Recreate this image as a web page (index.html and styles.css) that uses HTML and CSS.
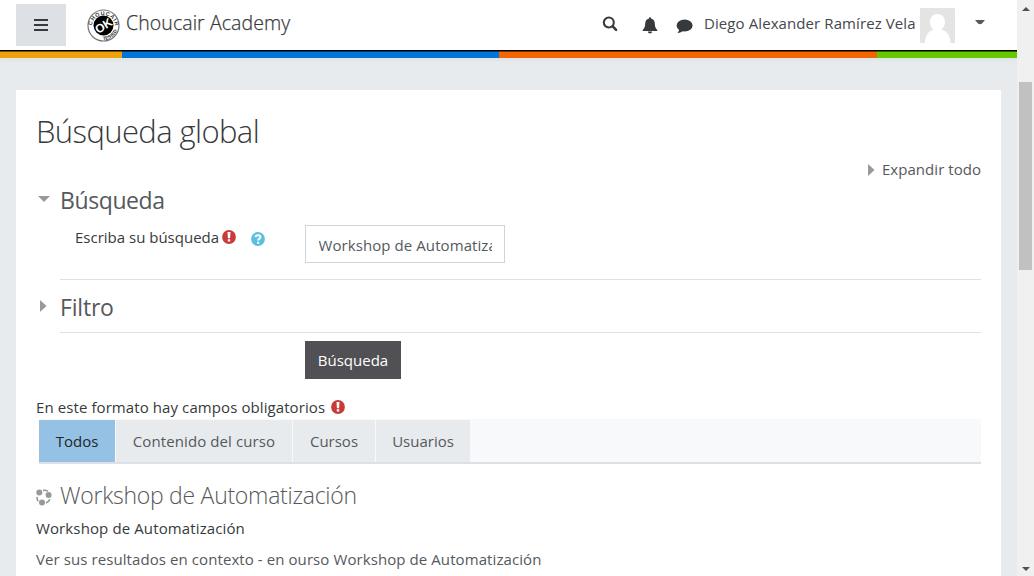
FILE: index.html
```html
<!DOCTYPE html>
<html lang="es">
<head>
<meta charset="utf-8">
<title>Choucair Academy</title>
<link rel="stylesheet" href="styles.css">
</head>
<body>
<div class="page">
  <header class="navbar">
    <button class="menu-btn" aria-label="Menú"><svg width="14" height="12" viewBox="0 0 14 12"><path d="M0 1h14M0 6h14M0 11h14" stroke="#343a40" stroke-width="2"/></svg></button>
    <svg class="logo" width="33" height="33" viewBox="0 0 33 33">
      <defs>
        <path id="arc-top" d="M5 19.500A11.600 11.600 0 1 1 28 19"/>
        <path id="arc-bottom" d="M16 31A14.600 14.600 0 0 0 30.500 20"/>
      </defs>
      <circle cx="16.500" cy="16.500" r="15.500" fill="#fff" stroke="#777" stroke-width="1.200"/>
      <circle cx="16.500" cy="16.500" r="10" fill="#000"/>
      <text class="logo-ring"><textPath href="#arc-top" startOffset="3" textLength="34">CHOUCAIR</textPath></text>
      <text class="logo-ring small"><textPath href="#arc-bottom" textLength="18">TESTED</textPath></text>
      <text class="logo-ok" x="16.500" y="20.800" text-anchor="middle" transform="rotate(-32 16.500 16.500)">OK</text>
    </svg>
    <span class="brand">Choucair Academy</span>
    <div class="nav-icons">
      <svg width="16" height="16" viewBox="0 0 16 16"><circle cx="6.800" cy="6.500" r="5" fill="none" stroke="#373a3c" stroke-width="2.100"/><path d="M10.500 10.200l3.600 3.700" stroke="#373a3c" stroke-width="2.500" stroke-linecap="round"/></svg>
      <svg class="bell" width="16" height="17" viewBox="0 0 16 17"><path d="M8 0.300c.7 0 1 .5 1 1.300 2.600.5 3.700 2.500 3.800 5 .1 3.400.9 5 2.500 6.300v1.200H.7v-1.200C2.300 11.600 3.100 10 3.200 6.600c.1-2.500 1.200-4.500 3.800-5 0-.8.3-1.300 1-1.300zM5.900 14.400h4.200c0 1.200-.9 2-2.100 2s-2.100-.8-2.100-2z" fill="#373a3c"/></svg>
      <svg class="comment" width="17" height="15" viewBox="0 0 17 15"><ellipse cx="8.600" cy="6.500" rx="8" ry="5.900" fill="#373a3c"/><path d="M3.200 9.500c0 2-.5 3.200-1.800 4.400 2.600-.1 4.600-1 6-2.400z" fill="#373a3c"/></svg>
    </div>
    <span class="user">Diego Alexander Ramírez Vela</span>
    <svg class="avatar" width="35" height="35" viewBox="0 0 35 35"><rect width="35" height="35" rx="1" fill="#e4e4e4"/><path d="M5 35C5 28 8.500 23 13.500 21.500 7.500 16.500 9.500 6 17.500 6s10 10.500 4 15.500C27 23 30.500 28 30.500 35z" fill="#fff"/></svg>
    <svg class="caret" width="10" height="5" viewBox="0 0 10 5"><path d="M0 0h10L7 3.600Q5 5 3 3.600z" fill="#55595c"/></svg>
  </header>
  <div class="stripe"><i class="orange"></i><i class="blue"></i><i class="red"></i><i class="green"></i></div>
  <main class="card">
    <h1>Búsqueda global</h1>
    <div class="expand"><svg width="7" height="12" viewBox="0 0 7 12"><path d="M0 0l6.500 6L0 12z" fill="#999"/></svg><span>Expandir todo</span></div>
    <section class="fieldset">
      <h3><span class="marker"><svg width="12" height="6" viewBox="0 0 12 6"><path d="M0 0h12L6 6z" fill="#999"/></svg></span><span>Búsqueda</span></h3>
      <div class="row">
        <label>Escriba su búsqueda</label>
        <svg class="req" width="14" height="14" viewBox="0 0 14 14"><circle cx="7" cy="7" r="6.900" fill="#c93a3a"/><path d="M5.500 2h3l-.4 6.300H5.900zM5.800 9.200h2.400v2.400H5.800z" fill="#fff"/></svg>
        <svg class="help" width="14" height="14" viewBox="0 0 14 14"><circle cx="7" cy="7" r="6.900" fill="#5bc0de"/><path d="M4.500 5.200C4.700 2.600 9.500 2.600 9.500 5.100c0 1.700-2.400 1.700-2.400 3.300M7.100 9.700v2" fill="none" stroke="#fff" stroke-width="2"/></svg>
        <div class="input"><span>Workshop de Automatización</span></div>
      </div>
    </section>
    <section class="fieldset filter">
      <h3><span class="marker right"><svg width="7" height="12" viewBox="0 0 7 12"><path d="M0 0l6.500 6L0 12z" fill="#999"/></svg></span><span>Filtro</span></h3>
    </section>
    <button class="submit">Búsqueda</button>
    <p class="required"><span>En este formato hay campos obligatorios</span><svg width="14" height="14" viewBox="0 0 14 14"><circle cx="7" cy="7" r="6.900" fill="#c93a3a"/><path d="M5.500 2h3l-.4 6.300H5.900zM5.800 9.200h2.400v2.400H5.800z" fill="#fff"/></svg></p>
    <nav class="tabs"><a class="tab active">Todos</a><a class="tab content">Contenido del curso</a><a class="tab courses">Cursos</a><a class="tab users">Usuarios</a></nav>
    <article class="result">
      <h4><svg width="16" height="17" viewBox="0 0 16 17"><g fill="#999"><circle cx="3.300" cy="3.600" r="3"/><circle cx="12.600" cy="6.100" r="3"/><circle cx="6" cy="13.400" r="3"/></g><path d="M7 1.400q3-.5 5 .9M1.200 7.800q-.5 2.600 1 4.500M10 14q3-1.200 3.800-3.700" fill="none" stroke="#999" stroke-width="1.600"/></svg><span>Workshop de Automatización</span></h4>
      <p class="summary">Workshop de Automatización</p>
      <p class="context">Ver sus resultados en contexto - en ourso Workshop de Automatización</p>
    </article>
  </main>
</div>
<aside class="scrollbar">
  <svg width="8" height="4" viewBox="0 0 8 4"><path d="M0 4h8L4 0z" fill="#505050"/></svg>
  <div class="thumb"></div>
  <svg class="down" width="8" height="4" viewBox="0 0 8 4"><path d="M0 0h8L4 4z" fill="#505050"/></svg>
</aside>
</body>
</html>
```
FILE: styles.css
```css
* { box-sizing: border-box; }
body {
  margin: 0;
  height: 576px;
  display: flex;
  overflow: hidden;
  background: #e7ebee;
  color: #373a3c;
  font: 400 15px/22px "Open Sans", "Noto Sans", sans-serif;
  white-space: nowrap;
}
svg { display: block; flex: none; }
h1, h3, h4, p { margin: 0; }
.page { width: 1017px; height: 576px; overflow: hidden; }

/* Top bar */
.navbar { height: 50px; background: #fff; display: flex; align-items: flex-start; padding-left: 16px; }
.menu-btn { width: 50px; height: 42px; margin-top: 4px; border: 0; padding: 0; background: #dde1e6; display: flex; align-items: center; justify-content: center; }
.logo { margin: 9px 0 0 21px; }
.logo-ring { font: 700 5.5px "Liberation Sans", sans-serif; fill: #333; }
.logo-ring.small { font-size: 4.8px; }
.logo-ok { font: 700 12px "Liberation Sans", sans-serif; fill: #fff; }
.brand { width: 166px; margin: 11px 0 0 6px; font-size: 19.5px; line-height: 24px; font-weight: 300; letter-spacing: .08px; -webkit-text-stroke: .25px #373a3c; }
.nav-icons { display: flex; margin: 16px 0 0 310px; }
.bell { margin: 1px 0 0 24px; }
.comment { margin: 3px 0 0 18px; }
.user { width: 212px; margin: 12px 0 0 11px; color: #45484a; letter-spacing: .09px; }
.avatar { margin: 8px 0 0 4px; }
.caret { margin: 20px 0 0 20px; }
.stripe { height: 8px; display: flex; border-top: 1px solid #000; box-shadow: inset 0 1px 1px rgba(0, 0, 0, .5), 0 2px 4px rgba(0, 0, 0, .04); }
.stripe i { height: 7px; box-shadow: inset 0 1px 0 rgba(0, 0, 0, .5); }
.orange { width: 122px; background: #f0a00a; }
.blue { width: 377px; background: #0474d8; }
.red { width: 378px; background: #f26500; }
.green { width: 140px; background: #66c800; }

/* Search card */
.card { margin: 32px 16px 0; padding: 19px 20px 0; height: 500px; background: #fff; }
h1 { font-size: 31px; line-height: 44px; font-weight: 300; letter-spacing: -.6px; }
.expand { display: flex; justify-content: flex-end; gap: 7px; height: 22px; margin-top: 5px; color: #55595c; }
.expand svg { margin-top: 6px; }
.expand span { width: 99px; letter-spacing: .04px; }
.fieldset { height: 100px; position: relative; }
.fieldset::after { content: ""; display: block; position: absolute; bottom: 0; left: 24px; right: 0; border-bottom: 1px solid #dee2e6; }
h3 { display: flex; align-items: flex-start; font-size: 23px; line-height: 30px; font-weight: 400; letter-spacing: -.4px; color: #55595c; padding-top: 5px; }
.marker { width: 24px; padding: 11px 0 0 2px; }
.marker.right { padding: 8px 0 0 4px; }
.row { display: flex; margin-left: 39px; height: 38px; margin-top: 10px; }
label { width: 143px; line-height: 24px; }
.req { margin: 5px 0 0 4px; }
.help { margin: 7px 0 0 15px; }
.input { width: 200px; height: 38px; margin-left: 40px; border: 1px solid #ced4da; padding: 0 12px 0 12.5px; line-height: 38px; color: #55595c; }
.input span { display: block; overflow: hidden; letter-spacing: .08px; }
.filter { height: 53px; }
.filter h3 { padding-top: 12px; letter-spacing: -.2px; }
.submit { display: block; width: 96px; height: 38px; margin: 8px 0 0 269px; border: 0; padding: 0; background: #515055; color: #fff; font: inherit; }
.required { display: flex; gap: 6px; height: 22px; margin-top: 17px; }
.required span { width: 289px; letter-spacing: .09px; }
.required svg { margin-top: 4px; }
.tabs { display: flex; height: 45px; margin-left: 3px; margin-top: 1px; background: #f8f9fb; border-bottom: 2px solid #dde1e7; padding-top: 1px; color: #55595c; }
.tab { height: 42px; line-height: 43px; text-align: center; background: #e8ebee; margin-right: 1px; }
.active { width: 76px; background: #95c2e4; color: #20262b; }
.content { width: 176px; letter-spacing: .1px; }
.courses { width: 82px; }
.users { width: 94px; }
.result { padding-top: 15px; }
h4 { display: flex; gap: 8px; height: 32px; font-size: 23px; line-height: 32px; font-weight: 300; letter-spacing: -.27px; color: #55595c; }
h4 svg { margin-top: 10px; }
.summary { margin-top: 5px; line-height: 24px; letter-spacing: .12px; }
.context { margin-top: 7px; line-height: 24px; letter-spacing: .085px; color: #55595c; }

/* Browser scrollbar */
.scrollbar { width: 17px; height: 576px; background: #f0f0f0; display: flex; flex-direction: column; align-items: center; padding: 7px 0 5px; }
.thumb { width: 13px; height: 188px; margin-top: 71px; background: #c1c1c1; }
.down { margin-top: auto; }
```
